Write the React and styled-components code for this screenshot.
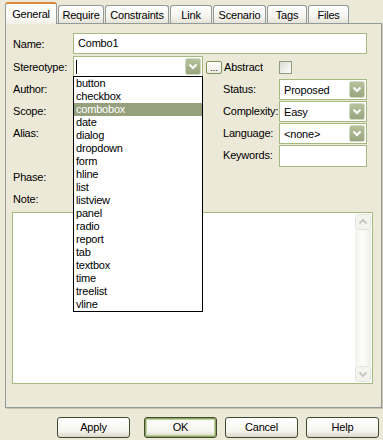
import React from 'react';
import styled, { createGlobalStyle } from 'styled-components';

const GlobalStyle = createGlobalStyle`
  body {
    margin: 0;
    background: #ece9d8;
    font-family: "Liberation Sans", Arial, sans-serif;
    font-size: 11px;
    letter-spacing: -0.2px;
    color: #000;
  }
`;

const TABS = [
  { label: 'General', width: 52, active: true },
  { label: 'Require', width: 46 },
  { label: 'Constraints', width: 64 },
  { label: 'Link', width: 42 },
  { label: 'Scenario', width: 53 },
  { label: 'Tags', width: 40 },
  { label: 'Files', width: 41 },
];

const STEREOTYPES = [
  'button', 'checkbox', 'combobox', 'date', 'dialog', 'dropdown', 'form', 'hline', 'list',
  'listview', 'panel', 'radio', 'report', 'tab', 'textbox', 'time', 'treelist', 'vline',
];

function DropArrow() {
  return (
    <svg width="16" height="17" viewBox="0 0 16 17">
      <defs>
        <linearGradient id="olive" x1="0" y1="0" x2="0" y2="1">
          <stop offset="0" stopColor="#b7c39c" />
          <stop offset="1" stopColor="#97a47c" />
        </linearGradient>
      </defs>
      <rect x="0.5" y="0.5" width="15" height="16" rx="2" fill="url(#olive)" stroke="#d3dac3" />
      <path d="M4.5 6.5 8 10l3.5-3.5" fill="none" stroke="#fff" strokeWidth="2" />
    </svg>
  );
}

function ScrollArrow({ down }) {
  return (
    <svg width="16" height="16" viewBox="0 0 16 16">
      <rect x="0.5" y="0.5" width="15" height="15" rx="2" fill="#f4f4ef" stroke="#e3e3dc" />
      <path
        d={down ? 'M4.5 6.5 8 10l3.5-3.5' : 'M4.5 9.5 8 6l3.5 3.5'}
        fill="none"
        stroke="#c8c8c0"
        strokeWidth="2"
      />
    </svg>
  );
}

function App() {
  return (
    <>
      <GlobalStyle />
      <Dialog>
        <TabStrip>
          {TABS.map((t) => (
            <Tab key={t.label} $width={t.width} $active={t.active}>
              {t.label}
            </Tab>
          ))}
        </TabStrip>

        <Panel>
          <NameRow>
            <FieldLabel>Name:</FieldLabel>
            <TextBox $w={294}>Combo1</TextBox>
          </NameRow>

          <FieldGrid>
            <FieldLabel $row={1}>Stereotype:</FieldLabel>
            <Cell $col={2} $row={1} $align="flex-start">
              <Combo $w={130} $anchor>
                <ComboText>
                  <Caret />
                </ComboText>
                <ComboButton>
                  <DropArrow />
                </ComboButton>
                <ListBox>
                  {STEREOTYPES.map((s) => (
                    <ListItem key={s} $selected={s === 'combobox'}>
                      {s}
                    </ListItem>
                  ))}
                </ListBox>
              </Combo>
            </Cell>
            <Cell $col={4} $row={1}>
              <DotsButton>...</DotsButton>
              <CheckText>Abstract</CheckText>
            </Cell>
            <Cell $col={5} $row={1}>
              <CheckBox />
            </Cell>

            <FieldLabel $row={2}>Author:</FieldLabel>
            <Cell $col={2} $row={2} $align="flex-end">
              <Combo $w={130}>
                <ComboText />
                <ComboButton>
                  <DropArrow />
                </ComboButton>
              </Combo>
            </Cell>
            <SideLabel $row={2}>Status:</SideLabel>
            <Cell $col={5} $row={2} $align="flex-end">
              <Combo $w={88}>
                <ComboText>Proposed</ComboText>
                <ComboButton>
                  <DropArrow />
                </ComboButton>
              </Combo>
            </Cell>

            <FieldLabel $row={3}>Scope:</FieldLabel>
            <Cell $col={2} $row={3} $align="flex-end">
              <Combo $w={130}>
                <ComboText />
                <ComboButton>
                  <DropArrow />
                </ComboButton>
              </Combo>
            </Cell>
            <SideLabel $row={3}>Complexity:</SideLabel>
            <Cell $col={5} $row={3} $align="flex-end">
              <Combo $w={88}>
                <ComboText>Easy</ComboText>
                <ComboButton>
                  <DropArrow />
                </ComboButton>
              </Combo>
            </Cell>

            <FieldLabel $row={4}>Alias:</FieldLabel>
            <Cell $col={2} $row={4} $align="flex-end">
              <TextBox $w={130} />
            </Cell>
            <SideLabel $row={4}>Language:</SideLabel>
            <Cell $col={5} $row={4} $align="flex-end">
              <Combo $w={88}>
                <ComboText>&lt;none&gt;</ComboText>
                <ComboButton>
                  <DropArrow />
                </ComboButton>
              </Combo>
            </Cell>

            <SideLabel $row={5}>Keywords:</SideLabel>
            <Cell $col={5} $row={5} $align="flex-start">
              <TextBox $w={88} $h={22} $top={1} />
            </Cell>

            <FieldLabel $row={6}>Phase:</FieldLabel>
            <Cell $col={2} $row={6} $align="flex-end">
              <TextBox $w={130} />
            </Cell>

            <FieldLabel $row={7}>Note:</FieldLabel>
          </FieldGrid>

          <NoteBox>
            <NoteArea />
            <ScrollBar>
              <ScrollArrow />
              <ScrollTrack />
              <ScrollArrow down />
            </ScrollBar>
          </NoteBox>
        </Panel>

        <Footer>
          <ApplyButton>Apply</ApplyButton>
          <DialogButton $default>OK</DialogButton>
          <DialogButton>Cancel</DialogButton>
          <DialogButton>Help</DialogButton>
        </Footer>
      </Dialog>
    </>
  );
}

export default App;

const Dialog = styled.div`
  width: 383px;
  height: 440px;
  overflow: hidden;
`;

const TabStrip = styled.div`
  display: flex;
  align-items: flex-end;
  gap: 1px;
  height: 23px;
  padding-left: 5px;
`;

const Tab = styled.div`
  position: relative;
  box-sizing: border-box;
  width: ${(p) => p.$width}px;
  height: ${(p) => (p.$active ? 22 : 18)}px;
  margin-bottom: ${(p) => (p.$active ? -1 : 0)}px;
  padding-top: ${(p) => (p.$active ? 3 : 2)}px;
  text-align: center;
  line-height: 14px;
  border: 1px solid #919b9c;
  border-bottom: none;
  border-radius: 3px 3px 0 0;
  background: ${(p) =>
    p.$active
      ? 'linear-gradient(#fffffe, #fbfbf8 60%, #f1efe6)'
      : 'linear-gradient(#ffffff, #f5f4ef 60%, #e6e3d6)'};
  border-top: ${(p) => (p.$active ? '2px solid #d8893e' : '1px solid #919b9c')};
  z-index: ${(p) => (p.$active ? 2 : 1)};
`;

const Panel = styled.div`
  box-sizing: border-box;
  width: 377px;
  height: 385px;
  margin-left: 5px;
  padding: 9px 0 0 7px;
  border: 1px solid #919b9c;
  box-shadow: 1px 1px 0 #c8c5b5;
`;

const NameRow = styled.div`
  display: flex;
  align-items: center;
  height: 21px;
`;

const FieldGrid = styled.div`
  display: grid;
  grid-template-columns: 60px 130px 3px 73px 88px;
  grid-auto-rows: 22px;
  margin-top: 2px;
`;

const FieldLabel = styled.span`
  display: flex;
  align-items: center;
  width: 60px;
  grid-column: 1;
  grid-row: ${(p) => p.$row || 'auto'};
`;

const SideLabel = styled.span`
  display: flex;
  align-items: center;
  padding-left: 17px;
  grid-column: 4;
  grid-row: ${(p) => p.$row};
`;

const Cell = styled.div`
  display: flex;
  align-items: ${(p) => p.$align || 'center'};
  grid-column: ${(p) => p.$col};
  grid-row: ${(p) => p.$row};
`;

const TextBox = styled.div`
  box-sizing: border-box;
  width: ${(p) => p.$w}px;
  height: ${(p) => p.$h || 21}px;
  margin-top: ${(p) => p.$top || 0}px;
  padding-left: 4px;
  line-height: 19px;
  border: 1px solid #a4b97f;
  background: #fff;
`;

const Combo = styled.div`
  position: ${(p) => (p.$anchor ? 'relative' : 'static')};
  box-sizing: border-box;
  display: flex;
  width: ${(p) => p.$w}px;
  height: 21px;
  border: 1px solid #a4b97f;
  background: #fff;
  z-index: ${(p) => (p.$anchor ? 5 : 'auto')};
`;

const ComboText = styled.div`
  flex: 1;
  display: flex;
  align-items: center;
  padding-left: 4px;
  overflow: hidden;
  white-space: nowrap;
`;

const Caret = styled.span`
  display: block;
  width: 1px;
  height: 14px;
  margin-left: -2px;
  background: #000;
`;

const ComboButton = styled.div`
  display: flex;
  margin: 1px;
`;

const ListBox = styled.div`
  position: absolute;
  top: 19px;
  left: -1px;
  box-sizing: border-box;
  width: 130px;
  border: 1px solid #000;
  background: #fff;
`;

const ListItem = styled.div`
  height: 13px;
  line-height: 13px;
  padding-left: 2px;
  background: ${(p) => (p.$selected ? '#96a07c' : 'transparent')};
  color: ${(p) => (p.$selected ? '#fff' : '#000')};
`;

const DotsButton = styled.div`
  box-sizing: border-box;
  width: 16px;
  height: 13px;
  border: 1px solid #7f9456;
  border-radius: 2px;
  background: linear-gradient(#ffffff, #ecebe2);
  font-size: 9px;
  line-height: 12px;
  text-align: center;
  letter-spacing: 0;
`;

const CheckText = styled.span`
  margin-left: 2px;
`;

const CheckBox = styled.div`
  box-sizing: border-box;
  width: 13px;
  height: 13px;
  border: 1px solid #8e9b80;
  background: linear-gradient(135deg, #dcdcd2, #ffffff);
`;

const NoteBox = styled.div`
  box-sizing: border-box;
  display: flex;
  width: 361px;
  height: 172px;
  margin: 2px 0 0 -1px;
  border: 1px solid #a4b97f;
  background: #fff;
`;

const NoteArea = styled.div`
  flex: 1;
`;

const ScrollBar = styled.div`
  display: flex;
  flex-direction: column;
  width: 16px;
  margin: 1px 1px 1px 0;
`;

const ScrollTrack = styled.div`
  flex: 1;
  background: linear-gradient(to right, #f1f1ec, #fdfdfb 45%, #f0f0ea);
`;

const Footer = styled.div`
  display: flex;
  justify-content: flex-end;
  gap: 8px;
  margin-top: 9px;
  padding-right: 4px;
`;

const DialogButton = styled.div`
  box-sizing: border-box;
  width: 73px;
  height: 21px;
  line-height: 19px;
  text-align: center;
  border: 1px solid #3f4b2e;
  border-radius: 3px;
  background: linear-gradient(#ffffff, #f5f4ee 70%, #d9d6c8);
  box-shadow: ${(p) => (p.$default ? 'inset 0 0 0 1px #90a868, inset 0 0 0 2px #bccf96' : 'none')};
`;

const ApplyButton = styled(DialogButton)`
  margin-right: 6px;
`;
